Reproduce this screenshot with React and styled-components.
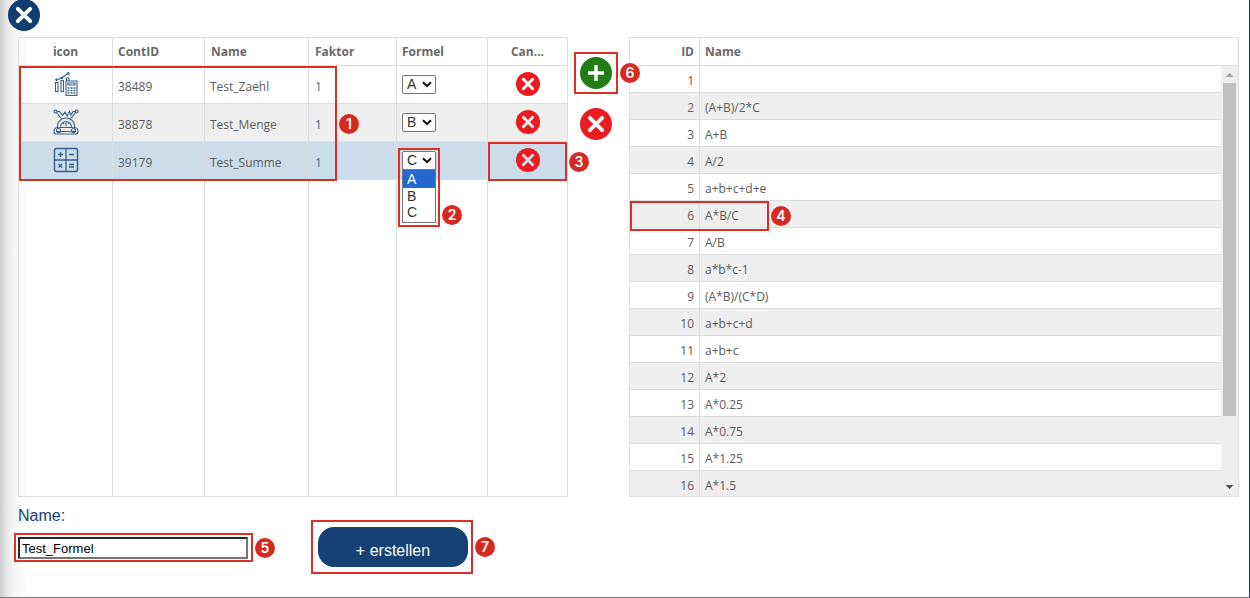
import React, { useState } from "react";
import styled, { createGlobalStyle, css } from "styled-components";

const GlobalStyle = createGlobalStyle`
  * {
    box-sizing: border-box;
  }

  body {
    margin: 0;
    background: #fff;
    font-family: "Open Sans", "Noto Sans", sans-serif;
    font-size: 12px;
    color: #5c5c5c;
  }
`;

const Dialog = styled.main`
  display: flex;
  flex-direction: column;
  height: 100vh;
  min-height: 400px;
  overflow: hidden;
  padding: 0 10px 0 18px;
  border-right: 1px solid #1f4a5c;
  border-bottom: 1px solid #77777b;
  background: linear-gradient(
    to right,
    #cccccc 0,
    #e6e6e6 6px,
    #f6f6f6 14px,
    #ffffff 28px
  );
`;

const TopBar = styled.header`
  flex: none;
  height: 37px;
`;

const RoundButton = styled.button`
  display: block;
  flex: none;
  width: ${props => props.$size}px;
  height: ${props => props.$size}px;
  padding: 0;
  border: 0;
  border-radius: 50%;
  background: ${props => props.$color};
  cursor: pointer;

  svg {
    display: block;
    width: 100%;
    height: 100%;
  }
`;

const CloseButton = styled(RoundButton)`
  margin: -1px 0 0 -10px;
`;

const CellButton = styled(RoundButton)`
  margin: -2px auto 0;
`;

const Panels = styled.div`
  flex: 1;
  display: flex;
  min-height: 0;
`;

const Panel = styled.section`
  position: relative;
  border: 1px solid #dedede;
  ${props =>
    props.$grow
      ? css`
          flex: 1;
          min-width: 0;
          overflow: hidden;
        `
      : css`
          flex: none;
          width: 550px;
        `};
`;

const Table = styled.table`
  width: 100%;
  height: ${props => (props.$fill ? "100%" : "auto")};
  table-layout: fixed;
  border-collapse: separate;
  border-spacing: 0;
`;

const Col = styled.col`
  width: ${props => props.$width}px;
`;

const cell = css`
  padding: 0 ${props => props.$pad || 5}px;
  border-right: 1px solid #dedede;
  text-align: ${props => props.$align || "left"};
  white-space: nowrap;

  &:last-child {
    border-right: 0;
  }
`;

const Th = styled.th`
  ${cell};
  height: 28px;
  border-bottom: 1px solid #dedede;
  font-weight: 700;
  color: #6a6a6a;
`;

const Td = styled.td`
  ${cell};
  position: relative;
  padding-top: ${props => props.$drop || 0}px;
  border-bottom: 1px solid #dedede;
  color: ${props => (props.$blue ? "#44698f" : "inherit")};
`;

const FillerTd = styled.td`
  ${cell};
`;

const Row = styled.tr`
  height: ${props => props.$height}px;
  background: ${props => props.$color};
`;

const CellIcon = styled.svg`
  display: block;
  width: 26px;
  height: 26px;
  margin: -2px auto 0;
  fill: none;
  stroke: #35608f;
  stroke-width: 1.1;
`;

const SelectBox = styled.div`
  position: relative;
  width: 34px;
  height: 19px;
  margin-top: -1px;

  svg {
    position: absolute;
    top: 6px;
    right: 4px;
    pointer-events: none;
  }
`;

const Select = styled.select`
  display: block;
  width: 34px;
  height: 19px;
  padding: 0 0 0 4px;
  border: 1px solid #767676;
  border-radius: 2px;
  background: #fff;
  color: #333;
  font: 14px "Liberation Sans", sans-serif;
  appearance: none;
`;

const OptionList = styled.ul`
  position: absolute;
  z-index: 2;
  top: 18px;
  left: 0;
  width: 34px;
  height: 54px;
  margin: 0;
  padding: 0;
  border: 1px solid #767676;
  background: #fff;
  list-style: none;
  font: 14px "Liberation Sans", sans-serif;
`;

const Option = styled.li`
  height: ${props => (props.$active ? 18 : 16)}px;
  padding-left: 4px;
  line-height: ${props => (props.$active ? 18 : 16)}px;
  background: ${props => (props.$active ? "#2268cf" : "#fff")};
  color: ${props => (props.$active ? "#fff" : "#333")};
`;

const Actions = styled.div`
  flex: none;
  display: flex;
  flex-direction: column;
  gap: 19px;
  width: 61px;
  padding: 20px 0 0 12px;
`;

const Scrollbar = styled.div`
  position: absolute;
  top: 28px;
  right: 0;
  bottom: 0;
  display: flex;
  flex-direction: column;
  align-items: center;
  width: 17px;
  padding: 7px 0;
  background: #efefef;
`;

const ScrollTrack = styled.div`
  flex: 1;
  width: 13px;
  margin: 6px 0;
`;

const ScrollThumb = styled.div`
  height: 84%;
  background: #c1c1c1;
`;

const Arrow = styled.div`
  width: 8px;
  height: 4px;
  background: ${props => (props.$down ? "#505050" : "#a3a3a3")};
  clip-path: ${props =>
    props.$down
      ? "polygon(0 0, 100% 0, 50% 100%)"
      : "polygon(50% 0, 100% 100%, 0 100%)"};
`;

const Form = styled.form`
  flex: none;
  display: flex;
  align-items: flex-start;
  gap: 70px;
  height: 100px;
`;

const Field = styled.div`
  width: 230px;
  padding-top: 9px;
`;

const Label = styled.label`
  display: block;
  margin-bottom: 11px;
  color: #164174;
  font: 16px/20px "Liberation Sans", sans-serif;
`;

const Input = styled.input`
  display: block;
  width: 100%;
  height: 22px;
  padding: 1px 2px;
  border: 2px solid;
  border-color: #262626 #767676 #767676 #262626;
  background: #fff;
  color: #000;
  font: 13px "Liberation Sans", sans-serif;
`;

const Submit = styled.button`
  display: block;
  width: 150px;
  height: 40px;
  padding: 8px 0 0;
  border: 0;
  border-radius: 16px;
  background: #164174;
  color: #fff;
  font: 16px "Liberation Sans", sans-serif;
  cursor: pointer;
`;

const Marked = styled.div`
  position: relative;
  margin-top: ${props => props.$space || 0}px;
`;

const Frame = styled.div`
  position: absolute;
  z-index: 3;
  inset: ${props => props.$inset || "auto"};
  ${props =>
    props.$box &&
    css`
      left: ${props.$box[0]}px;
      top: ${props.$box[1]}px;
      width: ${props.$box[2]}px;
      height: ${props.$box[3]}px;
    `};
  border: 2px solid #dc2f25;
  pointer-events: none;
`;

const Badge = styled.span`
  position: absolute;
  left: calc(100% + 4px);
  top: ${props => (props.$low ? "calc(100% - 20px)" : "calc(50% - 10px)")};
  width: 20px;
  height: 20px;
  border-radius: 50%;
  background: #d62a20;
  color: #fff;
  font: 600 14px/20px Inter, sans-serif;
  text-align: center;
`;

const Callout = ({ number, low, ...frame }) => (
  <Frame {...frame}>
    <Badge $low={low}>{number}</Badge>
  </Frame>
);

const Cross = ({ color = "#fff" }) => (
  <svg viewBox="0 0 32 32" aria-hidden="true">
    <path
      d="M9.8 9.8 22.2 22.2M22.2 9.8 9.8 22.2"
      stroke={color}
      strokeWidth="3.8"
      strokeLinecap="round"
    />
  </svg>
);

const Plus = () => (
  <svg viewBox="0 0 32 32" aria-hidden="true">
    <path d="M16 8v16M8 16h16" stroke="#fff" strokeWidth="3.4" />
  </svg>
);

const CounterIcon = () => (
  <CellIcon viewBox="0 0 26 26">
    <path d="M2.5 11.5h2.5v9h-2.5zM8 9.500h2.500v11h-2.500zM13.500 10v-3h2.500v3" />
    <path d="M3.500 9 8.500 7l6.500-4.500" />
    <circle cx="3.500" cy="8.700" r=".7" />
    <circle cx="8.700" cy="7" r=".7" />
    <circle cx="15.300" cy="2.500" r="1" />
    <path d="M13 10h11v14.500H13z" fill="#fff" />
    <path d="M15 12h7v2h-7z" />
    <path
      d="M14.500 17h2M17.500 17h2M20.500 17h2M14.500 19.500h2M17.500 19.500h2M20.500 19.500h2M14.500 22h2M17.500 22h2M20.500 22h2"
      strokeWidth="1.6"
    />
  </CellIcon>
);

const ScaleIcon = () => (
  <CellIcon viewBox="0 0 26 26">
    <circle cx="2.5" cy="2.5" r="1.5" />
    <circle cx="23.5" cy="2.5" r="1.5" />
    <path d="M3.5 3.5 9 10.500M22.5 3.5 17 10.500M4 2.500h2.500l3 4L12 3l2 4 2.500-4.500L18 6l2-3.500h2" />
    <path d="M4.500 19v-2a8.500 8 0 0 1 17 0v2" />
    <path d="M7.5 18a5.5 5.5 0 0 1 11 0M13 13v4M10 14l1 1M16 14l-1 1" />
    <path d="M5.5 18.5h15M3 22.5h20M3.5 25h19" />
    <path d="M5 18.5c-3 0-4 2-4 4s1 2.5 2.5 2.5M21 18.5c3 0 4 2 4 4S24 25 22.5 25" />
    <circle cx="5.5" cy="21.5" r="2" />
    <circle cx="20.5" cy="21.5" r="2" />
  </CellIcon>
);

const SumIcon = () => (
  <CellIcon viewBox="0 0 26 26">
    <rect x="1.5" y="1.5" width="23" height="23" rx="2" strokeWidth="1.5" />
    <path d="M13 1.5v23M1.5 13h23" strokeWidth="1.3" />
    <path
      d="M5 7.5h5M7.5 5v5M16 7.5h5M16 17.5h5M16 20h5M5.5 17l3.5 3.5M9 17l-3.5 3.5"
      strokeWidth="1.3"
    />
  </CellIcon>
);

const counters = [
  { id: 38489, name: "Test_Zaehl", formel: "A", Icon: CounterIcon, color: "transparent" },
  { id: 38878, name: "Test_Menge", formel: "B", Icon: ScaleIcon, color: "#efefef" },
  { id: 39179, name: "Test_Summe", formel: "C", Icon: SumIcon, color: "#cbddeb", open: true }
];

const formulas = [
  "",
  "(A+B)/2*C",
  "A+B",
  "A/2",
  "a+b+c+d+e",
  "A*B/C",
  "A/B",
  "a*b*c-1",
  "(A*B)/(C*D)",
  "a+b+c+d",
  "a+b+c",
  "A*2",
  "A*0.25",
  "A*0.75",
  "A*1.25",
  "A*1.5"
];

const letters = ["A", "B", "C"];

const FormelSelect = ({ initial, open, label }) => {
  const [value, setValue] = useState(initial);
  return (
    <SelectBox>
      <Select
        aria-label={label}
        value={value}
        onChange={e => setValue(e.target.value)}
      >
        {letters.map(l => (
          <option key={l}>{l}</option>
        ))}
      </Select>
      <svg width="10" height="7" viewBox="0 0 10 7" aria-hidden="true">
        <path d="M1 1.2 5 5l4-3.8" fill="none" stroke="#111" strokeWidth="2" />
      </svg>
      {open && (
        <OptionList>
          {letters.map(l => (
            <Option key={l} $active={l === "A"}>
              {l}
            </Option>
          ))}
        </OptionList>
      )}
      {open && <Callout number={2} low $inset="-3px -4px -57px -4px" />}
    </SelectBox>
  );
};

const CounterTable = () => (
  <Panel>
    <Table $fill>
      <colgroup>
        <Col $width={94} />
        <Col $width={92} />
        <Col $width={104} />
        <Col $width={88} />
        <Col $width={91} />
        <Col $width={79} />
      </colgroup>
      <thead>
        <tr>
          <Th $align="center">icon</Th>
          <Th>ContID</Th>
          <Th $pad={6}>Name</Th>
          <Th $pad={6}>Faktor</Th>
          <Th>Formel</Th>
          <Th $align="center">Can...</Th>
        </tr>
      </thead>
      <tbody>
        {counters.map(({ id, name, formel, Icon, color, open }) => (
          <Row key={id} $height={38} $color={color}>
            <Td>
              <Icon />
            </Td>
            <Td $drop={3}>{id}</Td>
            <Td $drop={3}>{name}</Td>
            <Td $drop={3} $pad={6} $blue>
              1
            </Td>
            <Td>
              <FormelSelect initial={formel} open={open} label={`Formel ${name}`} />
            </Td>
            <Td>
              <CellButton $size={24} $color="#ea1c1f" aria-label={`${name} entfernen`}>
                <Cross color={color === "transparent" ? "#fff" : color} />
              </CellButton>
              {open && <Callout number={3} $inset="0 0 -2px 0" />}
            </Td>
          </Row>
        ))}
        <tr aria-hidden="true">
          {[0, 1, 2, 3, 4, 5].map(i => (
            <FillerTd key={i} />
          ))}
        </tr>
      </tbody>
    </Table>
    <Callout number={1} $box={[0, 28, 318, 115]} />
  </Panel>
);

const FormulaTable = () => (
  <Panel $grow>
    <Table>
      <colgroup>
        <Col $width={70} />
        <col />
      </colgroup>
      <thead>
        <tr>
          <Th $align="right">ID</Th>
          <Th>Name</Th>
        </tr>
      </thead>
      <tbody>
        {formulas.map((formula, i) => (
          <Row key={i} $height={27} $color={i % 2 ? "#efefef" : "#fff"}>
            <Td $drop={2} $align="right">
              {i + 1}
            </Td>
            <Td $drop={2}>{formula}</Td>
          </Row>
        ))}
      </tbody>
    </Table>
    <Scrollbar>
      <Arrow />
      <ScrollTrack>
        <ScrollThumb />
      </ScrollTrack>
      <Arrow $down />
    </Scrollbar>
    <Callout number={4} $box={[0, 163, 139, 30]} />
  </Panel>
);

const App = () => {
  const [name, setName] = useState("Test_Formel");
  return (
    <Dialog>
      <GlobalStyle />
      <TopBar>
        <CloseButton $size={32} $color="#113e70" aria-label="Schließen">
          <Cross />
        </CloseButton>
      </TopBar>
      <Panels>
        <CounterTable />
        <Actions>
          <Marked>
            <RoundButton $size={32} $color="#227d14" aria-label="Hinzufügen">
              <Plus />
            </RoundButton>
            <Callout number={6} $inset="-5px 11px -5px -6px" />
          </Marked>
          <RoundButton $size={32} $color="#ea1c1f" aria-label="Abbrechen">
            <Cross />
          </RoundButton>
        </Actions>
        <FormulaTable />
      </Panels>
      <Form onSubmit={e => e.preventDefault()}>
        <Field>
          <Label htmlFor="name">Name:</Label>
          <Marked>
            <Input id="name" value={name} onChange={e => setName(e.target.value)} />
            <Callout number={5} $inset="-4px -5px -3px -4px" />
          </Marked>
        </Field>
        <Marked $space={30}>
          <Submit>+ erstellen</Submit>
          <Callout number={7} $inset="-7px -5px -7px -7px" />
        </Marked>
      </Form>
    </Dialog>
  );
};

export default App;
